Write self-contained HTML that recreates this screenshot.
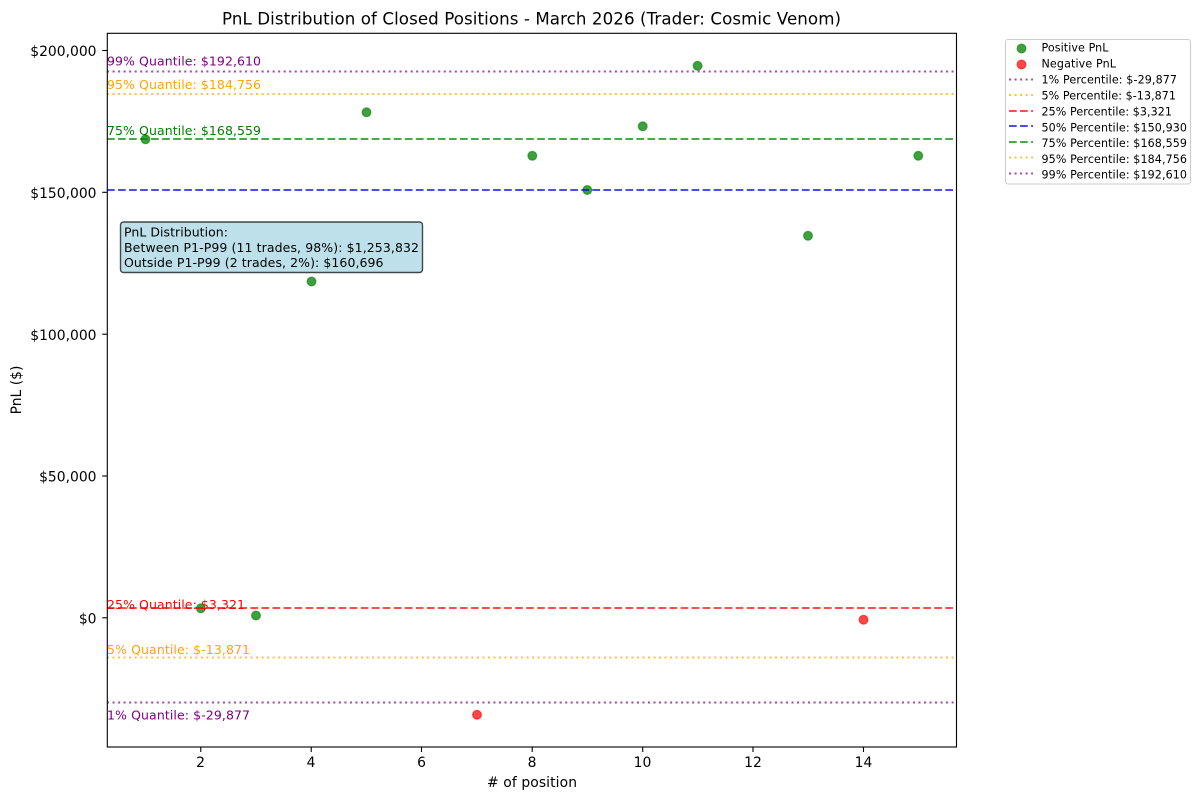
<!DOCTYPE html>
<html>
<head>
<meta charset="utf-8">
<style>
html,body{margin:0;padding:0;background:#fff;width:1200px;height:800px;overflow:hidden}
svg{display:block}
text{font-family:"DejaVu Sans",sans-serif;fill:#000}
.t{font-size:13.89px}
.q{font-size:12.5px}
.l{font-size:11.11px;fill:#000}
.d{stroke-width:2.08;stroke-dasharray:7.7 3.33;fill:none;stroke-opacity:.7}
.o{stroke-width:2.08;stroke-dasharray:2.08 3.44;fill:none;stroke-opacity:.7}
</style>
</head>
<body>
<svg width="1200" height="800" viewBox="0 0 1200 800" xmlns="http://www.w3.org/2000/svg">
<text x="222" y="24.5" font-size="16.67" textLength="619">PnL Distribution of Closed Positions - March 2026 (Trader: Cosmic Venom)</text>

<g fill="green" fill-opacity=".75" stroke="green" stroke-opacity=".6" stroke-width="1.2">
<circle cx="145.5" cy="139.3" r="4.4"/>
<circle cx="200.8" cy="608.3" r="4.4"/>
<circle cx="256" cy="615.5" r="4.4"/>
<circle cx="311.5" cy="281.5" r="4.4"/>
<circle cx="366.5" cy="112.3" r="4.4"/>
<circle cx="532.3" cy="155.8" r="4.4"/>
<circle cx="587.3" cy="190" r="4.4"/>
<circle cx="642.7" cy="126.3" r="4.4"/>
<circle cx="697.6" cy="65.8" r="4.4"/>
<circle cx="808" cy="235.8" r="4.4"/>
<circle cx="918.3" cy="155.8" r="4.4"/>
</g>
<g fill="red" fill-opacity=".72" stroke="red" stroke-opacity=".6" stroke-width="1.2">
<circle cx="477" cy="714.8" r="4.4"/>
<circle cx="863.5" cy="619.7" r="4.4"/>
</g>

<line class="o" x1="107" x2="954" y1="702.5" y2="702.5" stroke="purple"/>
<line class="o" x1="107" x2="954" y1="657.5" y2="657.5" stroke="orange"/>
<line class="d" x1="107" x2="954" y1="608" y2="608" stroke="red"/>
<line class="d" x1="107" x2="954" y1="190" y2="190" stroke="blue"/>
<line class="d" x1="107" x2="954" y1="139" y2="139" stroke="green"/>
<line class="o" x1="107" x2="954" y1="94" y2="94" stroke="orange"/>
<line class="o" x1="107" x2="954" y1="71.5" y2="71.5" stroke="purple"/>

<text class="q" x="107" y="65.5" textLength="154" style="fill:purple">99% Quantile: $192,610</text>
<text class="q" x="107" y="88.8" textLength="154" style="fill:orange">95% Quantile: $184,756</text>
<text class="q" x="107" y="135.2" textLength="154" style="fill:green">75% Quantile: $168,559</text>
<text class="q" x="107" y="608.8" textLength="138" style="fill:red">25% Quantile: $3,321</text>
<text class="q" x="107" y="654" textLength="143" style="fill:orange">5% Quantile: $-13,871</text>
<text class="q" x="107" y="719.5" textLength="143" style="fill:purple">1% Quantile: $-29,877</text>

<rect x="120.5" y="222" width="302" height="50.5" rx="3" ry="3" fill="#add8e6" fill-opacity=".8" stroke="#000" stroke-opacity=".7" stroke-width="1.4"/>
<text class="q" x="124" y="236.5" textLength="104">PnL Distribution:</text>
<text class="q" x="124" y="252" textLength="295">Between P1-P99 (11 trades, 98%): $1,253,832</text>
<text class="q" x="124" y="267" textLength="259.5">Outside P1-P99 (2 trades, 2%): $160,696</text>

<rect x="107.3" y="33.3" width="849.2" height="713.7" fill="none" stroke="#000" stroke-width="1.1"/>

<g stroke="#000" stroke-width="1.1">
<line x1="102.2" x2="107" y1="50.5" y2="50.5"/>
<line x1="102.2" x2="107" y1="192.3" y2="192.3"/>
<line x1="102.2" x2="107" y1="334.2" y2="334.2"/>
<line x1="102.2" x2="107" y1="476" y2="476"/>
<line x1="102.2" x2="107" y1="617.8" y2="617.8"/>
<line x1="200.8" x2="200.8" y1="747" y2="752"/>
<line x1="311.2" x2="311.2" y1="747" y2="752"/>
<line x1="421.5" x2="421.5" y1="747" y2="752"/>
<line x1="532.2" x2="532.2" y1="747" y2="752"/>
<line x1="642.7" x2="642.7" y1="747" y2="752"/>
<line x1="753" x2="753" y1="747" y2="752"/>
<line x1="863.5" x2="863.5" y1="747" y2="752"/>
</g>

<g text-anchor="end">
<text class="t" x="96.5" y="56">$200,000</text>
<text class="t" x="96.5" y="198">$150,000</text>
<text class="t" x="96.5" y="339.8">$100,000</text>
<text class="t" x="96.5" y="481.6">$50,000</text>
<text class="t" x="96.5" y="623.4">$0</text>
</g>
<g text-anchor="middle">
<text class="t" x="200.5" y="767">2</text>
<text class="t" x="311" y="767">4</text>
<text class="t" x="421.5" y="767">6</text>
<text class="t" x="532" y="767">8</text>
<text class="t" x="642.5" y="767">10</text>
<text class="t" x="753" y="767">12</text>
<text class="t" x="863.5" y="767">14</text>
</g>
<text class="t" x="487" y="787" textLength="90">  # of position</text>
<text class="t" x="0" y="0" text-anchor="middle" transform="translate(21,390) rotate(-90)">PnL ($)</text>

<rect x="1005.5" y="39.5" width="185" height="144.5" rx="2.5" ry="2.5" fill="#fff" stroke="#ccc" stroke-width="1.1"/>
<circle cx="1021.5" cy="48.5" r="4.4" fill="green" fill-opacity=".75" stroke="green" stroke-opacity=".6" stroke-width="1.2"/>
<circle cx="1021.5" cy="64.5" r="4.4" fill="red" fill-opacity=".72" stroke="red" stroke-opacity=".6" stroke-width="1.2"/>
<line class="o" x1="1009" x2="1033" y1="79.5" y2="79.5" stroke="purple"/>
<line class="o" x1="1009" x2="1033" y1="95" y2="95" stroke="orange"/>
<line class="d" x1="1009" x2="1033" y1="111" y2="111" stroke="red"/>
<line class="d" x1="1009" x2="1033" y1="126" y2="126" stroke="blue"/>
<line class="d" x1="1009" x2="1033" y1="142" y2="142" stroke="green"/>
<line class="o" x1="1009" x2="1033" y1="157.5" y2="157.5" stroke="orange"/>
<line class="o" x1="1009" x2="1033" y1="173.5" y2="173.5" stroke="purple"/>
<text class="l" x="1041.5" y="51.5" textLength="67">Positive PnL</text>
<text class="l" x="1041.5" y="67.5" textLength="74.5">Negative PnL</text>
<text class="l" x="1041.5" y="83.3" textLength="135.5">1% Percentile: $-29,877</text>
<text class="l" x="1041.5" y="99.3" textLength="134.5">5% Percentile: $-13,871</text>
<text class="l" x="1041.5" y="115.3" textLength="130.5">25% Percentile: $3,321</text>
<text class="l" x="1041.5" y="131.3" textLength="145.5">50% Percentile: $150,930</text>
<text class="l" x="1041.5" y="147" textLength="145.5">75% Percentile: $168,559</text>
<text class="l" x="1041.5" y="163" textLength="145.5">95% Percentile: $184,756</text>
<text class="l" x="1041.5" y="178.5" textLength="145.5">99% Percentile: $192,610</text>
</svg>
</body>
</html>
